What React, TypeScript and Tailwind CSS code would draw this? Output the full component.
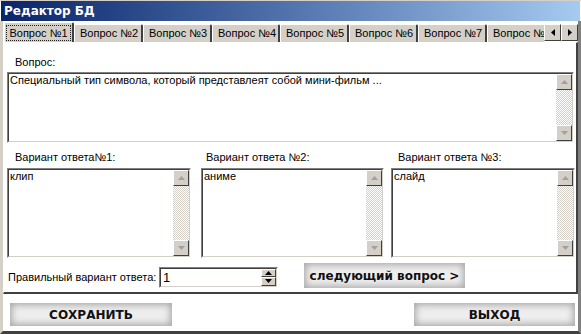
import React from 'react';

const tabs = ['Вопрос №1', 'Вопрос №2', 'Вопрос №3', 'Вопрос №4', 'Вопрос №5', 'Вопрос №6', 'Вопрос №7', 'Вопрос №8'];
const tabWidths = [70, 69, 69, 68, 69, 69, 69, 69];

const ScrollBtn = ({ up }: { up: boolean }) => (
  <div className="w-[16px] h-[16px] shrink-0 bg-[#d4d0c8] border border-t-white border-l-white border-r-[#404040] border-b-[#404040] flex items-center justify-center">
    <svg width="7" height="4" viewBox="0 0 7 4">
      {up ? <polygon points="3.5,0 7,4 0,4" fill="#a0a0a0" /> : <polygon points="0,0 7,0 3.5,4" fill="#a0a0a0" />}
    </svg>
  </div>
);

const Memo = ({ text, className }: { text: string; className: string }) => (
  <div className={`flex border border-t-[#808080] border-l-[#808080] border-b-white border-r-white ${className}`}>
    <div className="flex-1 flex border border-t-[#404040] border-l-[#404040] border-b-[#d4d0c8] border-r-[#d4d0c8] bg-white">
      <div className="flex-1 pl-[1px] leading-[13px]">{text}</div>
      <div className="w-[16px] flex flex-col">
        <ScrollBtn up />
        <div className="flex-1 bg-[repeating-conic-gradient(#d4d0c8_0_25%,#ffffff_0_50%)] bg-[length:2px_2px]" />
        <ScrollBtn up={false} />
      </div>
    </div>
  </div>
);

const GlowButton = ({ label, className }: { label: string; className: string }) => (
  <div
    className={`flex items-center justify-center bg-[#eeeeee] shadow-[inset_0_0_7px_2px_#a8a8a8] font-['DejaVu_Sans',sans-serif] font-bold text-[12px] text-[#111] ${className}`}
  >
    {label}
  </div>
);

export default function App() {
  return (
    <div className="w-[581px] h-[334px] bg-white overflow-hidden font-['Liberation_Sans',Arial,sans-serif] text-[11px] text-black flex flex-col border-t border-[#d4d0c8]">
      <div className="h-[20px] shrink-0 mx-[1px] bg-gradient-to-r from-[#0a246a] via-[#5373ad] to-[#a6caf0] flex items-center pl-[3px] text-white font-bold text-[12px] font-['DejaVu_Sans',sans-serif]">
        Редактор БД
      </div>
      <div className="flex-1 flex flex-col border-l-[3px] border-r-[3px] border-b-[3px] border-l-[#d4d0c8] border-r-[#808080] border-b-[#404040]">
        {/* tab strip */}
        <div className="h-[21px] shrink-0 flex items-end relative">
          <div className="flex items-end pl-[1px] w-[541px] overflow-hidden">
            {tabs.map((t, i) =>
              i === 0 ? (
                <div
                  key={t}
                  style={{ width: tabWidths[i] }}
                  className="h-[21px] shrink-0 bg-[#d4d0c8] border-t border-l border-white border-r-2 border-r-[#404040] rounded-t-[2px] flex items-center justify-center relative z-10 -mb-[1px] whitespace-nowrap"
                >
                  <span className="text-[11px] px-[2px] leading-[14px] outline-1 outline-dotted outline-[#222]">{t}</span>
                </div>
              ) : (
                <div
                  key={t}
                  style={{ width: tabWidths[i] }}
                  className="h-[18px] shrink-0 bg-[#d4d0c8] border-t border-l border-white border-r-2 border-r-[#404040] rounded-t-[2px] flex items-center pl-[5px] whitespace-nowrap overflow-hidden"
                >
                  <span className="text-[11px]">{t}</span>
                </div>
              )
            )}
          </div>
          <div className="flex mb-[1px] ml-auto">
            {[true, false].map((left) => (
              <div
                key={String(left)}
                className="w-[17px] h-[17px] bg-[#d4d0c8] border border-t-white border-l-white border-r-[#404040] border-b-[#404040] flex items-center justify-center"
              >
                <svg width="4" height="7" viewBox="0 0 4 7">
                  {left ? <polygon points="4,0 4,7 0,3.5" fill="#000" /> : <polygon points="0,0 0,7 4,3.5" fill="#000" />}
                </svg>
              </div>
            ))}
          </div>
        </div>

        {/* tab page */}
        <div className="h-[252px] shrink-0 bg-white border-t border-l border-white border-r-2 border-r-[#404040] border-b-2 border-b-[#404040] flex flex-col">
          <div className="pl-[11px] mt-[13px] leading-[13px]">Вопрос:</div>
          <Memo text="Специальный тип символа, который представлеят собой мини-фильм ..." className="ml-[3px] mt-[3px] w-[567px] h-[71px]" />
          <div className="flex mt-[8px]">
            <div className="flex flex-col ml-[3px] w-[184px]">
              <div className="pl-[8px] leading-[13px]">Вариант ответа№1:</div>
              <Memo text="клип" className="mt-[4px] h-[90px]" />
            </div>
            <div className="flex flex-col ml-[10px] w-[183px]">
              <div className="pl-[5px] leading-[13px]">Вариант ответа №2:</div>
              <Memo text="аниме" className="mt-[4px] h-[90px]" />
            </div>
            <div className="flex flex-col ml-[7px] w-[184px]">
              <div className="pl-[7px] leading-[13px]">Вариант ответа №3:</div>
              <Memo text="слайд" className="mt-[4px] h-[90px]" />
            </div>
          </div>
          <div className="flex items-center mt-[5px]">
            <div className="pl-[4px] w-[155px] leading-[13px] mt-[3px]">Правильный вариант ответа:</div>
            <div className="w-[119px] h-[21px] flex border border-t-[#808080] border-l-[#808080] border-b-white border-r-white mt-[3px]">
              <div className="flex-1 flex border border-t-[#404040] border-l-[#404040] border-b-[#d4d0c8] border-r-[#d4d0c8] bg-white">
                <div className="flex-1 pl-[2px] text-[13px] leading-[17px]">1</div>
                <div className="w-[15px] flex flex-col">
                  {[true, false].map((up) => (
                    <div
                      key={String(up)}
                      className="flex-1 bg-[#d4d0c8] border border-t-white border-l-white border-r-[#404040] border-b-[#404040] flex items-center justify-center"
                    >
                      <svg width="7" height="4" viewBox="0 0 7 4">
                        {up ? <polygon points="3.5,0 7,4 0,4" fill="#000" /> : <polygon points="0,0 7,0 3.5,4" fill="#000" />}
                      </svg>
                    </div>
                  ))}
                </div>
              </div>
            </div>
            <GlowButton label="следующий вопрос >" className="ml-[26px] w-[161px] h-[25px]" />
          </div>
        </div>

        <div className="flex justify-between items-start pt-[9px] pl-[7px] pr-[3px]">
          <GlowButton label="СОХРАНИТЬ" className="w-[162px] h-[23px]" />
          <GlowButton label="ВЫХОД" className="w-[161px] h-[23px]" />
        </div>
      </div>
    </div>
  );
}
